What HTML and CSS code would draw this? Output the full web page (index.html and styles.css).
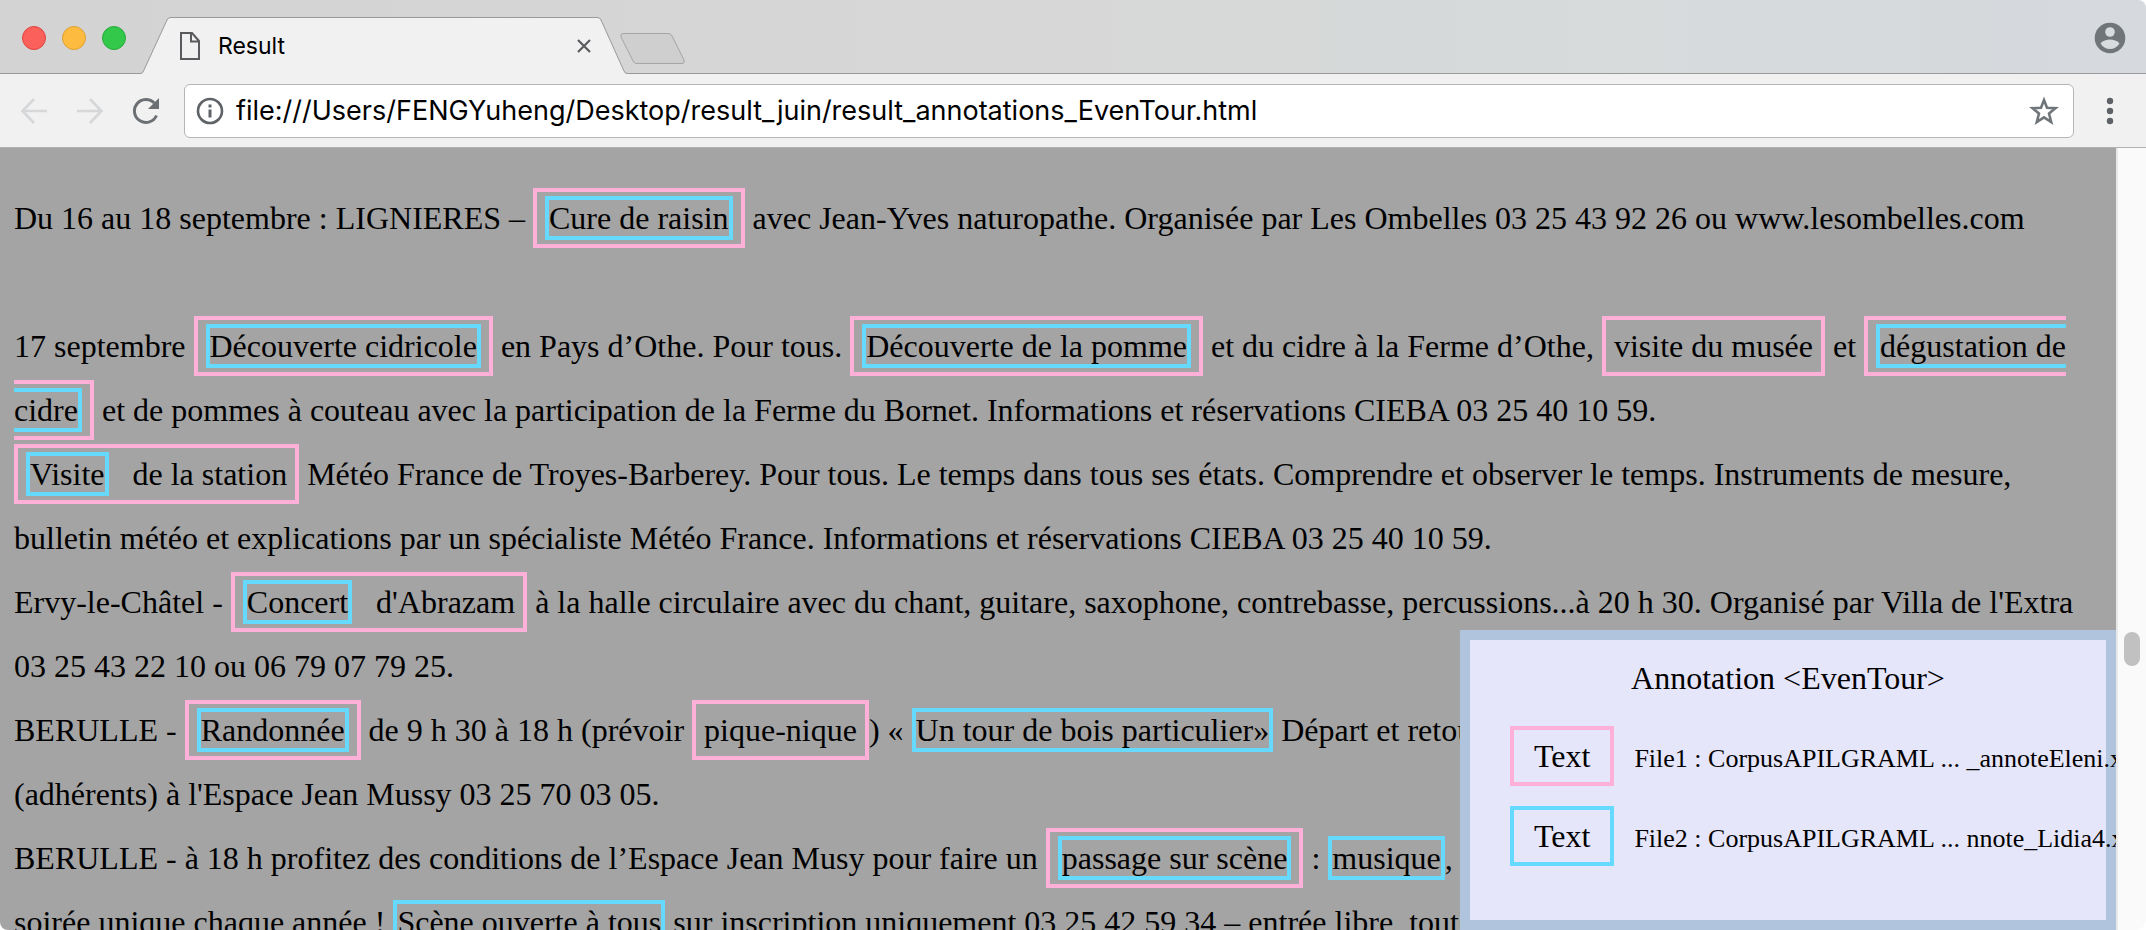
FILE: index.html
```html
<!DOCTYPE html>
<html lang="fr">
<head>
<meta charset="utf-8">
<title>Result</title>
<link rel="stylesheet" href="styles.css">
</head>
<body>
<div class="window">
  <header class="tabstrip">
    <div class="lights">
      <button class="light light-close" aria-label="Fermer"></button>
      <button class="light light-min" aria-label="Réduire"></button>
      <button class="light light-max" aria-label="Agrandir"></button>
    </div>
    <div class="tab">
      <svg class="tab-shape" width="488" height="58" viewBox="0 0 488 58" aria-hidden="true">
        <path d="M0 56.500H1Q2.500 56.500 3.500 54L27 3Q28 .5 31 .5H457Q460 .5 461 3L484 54Q485 56.500 487 56.500H488V58H0Z" fill="#f1f1f1"/>
        <path d="M0 56.500H1Q2.500 56.500 3.500 54L27 3Q28 .5 31 .5H457Q460 .5 461 3L484 54Q485 56.500 487 56.500H488" fill="none" stroke="#97999b"/>
      </svg>
      <svg class="tab-file" width="20" height="28" viewBox="0 0 20 28" aria-hidden="true">
        <path d="M1 1H12L19 9V27H1ZM11 1V9.500H19" fill="none" stroke="#5a5b5e" stroke-width="2"/>
      </svg>
      <span class="tab-title">Result</span>
      <button class="tab-close" aria-label="Fermer l'onglet">
        <svg width="14" height="14" viewBox="0 0 14 14"><path d="M1 1L13 13M13 1L1 13" stroke="#5a5b5e" stroke-width="2.200"/></svg>
      </button>
    </div>
    <button class="newtab" aria-label="Nouvel onglet">
      <svg width="67" height="34" viewBox="0 0 67 34"><path d="M4 1.500H49Q52 1.500 53 4L65 28Q66 31.500 63 31.500H18Q15 31.500 14 29L2 5Q1 1.500 4 1.500Z" fill="#cfcfcf" stroke="#a3a5a6"/></svg>
    </button>
    <button class="avatar" aria-label="Profil">
      <svg width="32" height="32" viewBox="0 0 32 32"><circle cx="16" cy="16" r="15.300" fill="#707579"/><circle cx="16" cy="10" r="4.800" fill="#d7dbdd"/><path d="M6.500 21.500C9 18.500 12.500 17.500 16 17.500S23 18.500 25.500 21.500C23.500 25 20 27 16 27S8.500 25 6.500 21.500Z" fill="#d7dbdd"/></svg>
    </button>
  </header>

  <nav class="toolbar">
    <div class="nav-buttons">
      <button class="icon" aria-label="Précédent"><svg width="28" height="28" viewBox="0 0 28 28"><path d="M27 14H3M14 2L2.500 14L14 26" fill="none" stroke="#d5d7d9" stroke-width="2.600"/></svg></button>
      <button class="icon" aria-label="Suivant"><svg width="28" height="28" viewBox="0 0 28 28"><path d="M1 14H25M14 2L25.500 14L14 26" fill="none" stroke="#d5d7d9" stroke-width="2.600"/></svg></button>
      <button class="icon" aria-label="Actualiser"><svg width="28" height="28" viewBox="0 0 28 28"><path d="M24.500 18.500A11.500 11.500 0 1 1 22.300 6" fill="none" stroke="#6c7075" stroke-width="3"/><path d="M27 1V12H16Z" fill="#6c7075"/></svg></button>
    </div>
    <div class="omnibox">
      <svg width="28" height="28" viewBox="0 0 28 28" aria-hidden="true"><circle cx="14" cy="14" r="12" fill="none" stroke="#5f6368" stroke-width="2.600"/><path d="M12.500 12.500H15.500V20.500H12.500ZM12.500 7.500H15.500V10.500H12.500Z" fill="#5f6368"/></svg>
      <input class="url" type="text" aria-label="Adresse" value="file:///Users/FENGYuheng/Desktop/result_juin/result_annotations_EvenTour.html">
      <button class="icon" aria-label="Favori"><svg width="30" height="30" viewBox="0 0 30 30"><path d="M15 4L18 11.800L26.500 12.200L20 17.500L22.200 26L15 21.300L7.800 26L10 17.500L3.500 12.200L12 11.800Z" fill="none" stroke="#70757a" stroke-width="2.600"/></svg></button>
    </div>
    <button class="icon menu" aria-label="Menu"><svg width="8" height="28" viewBox="0 0 8 28"><g fill="#5f6368"><circle cx="4" cy="4" r="3.200"/><circle cx="4" cy="14" r="3.200"/><circle cx="4" cy="24" r="3.200"/></g></svg></button>
  </nav>

  <div class="viewport">
    <main class="page">
      <p class="entry entry-first">Du 16 au 18 septembre : LIGNIERES – <span class="file1"><span class="file2">Cure de raisin</span></span> avec Jean-Yves naturopathe. Organisée par Les Ombelles 03 25 43 92 26 ou www.lesombelles.com</p>
      <p class="entry">17 septembre <span class="file1"><span class="file2">Découverte cidricole</span></span> en Pays d’Othe. Pour tous. <span class="file1"><span class="file2">Découverte de la pomme</span></span> et du cidre à la Ferme d’Othe, <span class="file1">visite du musée</span> et <span class="file1"><span class="file2">dégustation de cidre</span></span> et de pommes à couteau avec la participation de la Ferme du Bornet. Informations et réservations CIEBA 03 25 40 10 59.</p>
      <p class="entry"><span class="file1"><span class="file2">Visite</span>&nbsp;&nbsp; de la station</span> Météo France de Troyes-Barberey. Pour tous. Le temps dans tous ses états. Comprendre et observer le temps. Instruments de mesure, bulletin météo et explications par un spécialiste Météo France. Informations et réservations CIEBA 03 25 40 10 59.</p>
      <p class="entry">Ervy-le-Châtel - <span class="file1"><span class="file2">Concert</span>&nbsp;&nbsp; d'Abrazam</span> à la halle circulaire avec du chant, guitare, saxophone, contrebasse, percussions...à 20 h 30. Organisé par Villa de l'Extra 03 25 43 22 10 ou 06 79 07 79 25.</p>
      <p class="entry">BERULLE - <span class="file1"><span class="file2">Randonnée</span></span> de 9 h 30 à 18 h (prévoir <span class="file1">pique-nique</span>) « <span class="file2">Un tour de bois particulier»</span> Départ et retour<br>(adhérents) à l'Espace Jean Mussy 03 25 70 03 05.</p>
      <p class="entry">BERULLE - à 18 h profitez des conditions de l’Espace Jean Musy pour faire un <span class="file1"><span class="file2">passage sur scène</span></span> : <span class="file2">musique</span>, <span class="file2">danse</span><br>soirée unique chaque année ! <span class="file2">Scène ouverte à tous</span> sur inscription uniquement 03 25 42 59 34 – entrée libre, toute</p>
      <aside class="legend">
        <h1 class="legend-title">Annotation &lt;EvenTour&gt;</h1>
        <ul class="legend-list">
          <li class="legend-row"><span class="sample sample-file1">Text</span><span class="legend-file">File1 : CorpusAPILGRAML ... _annoteEleni.xml</span></li>
          <li class="legend-row"><span class="sample sample-file2">Text</span><span class="legend-file">File2 : CorpusAPILGRAML ... nnote_Lidia4.xml</span></li>
        </ul>
      </aside>
    </main>
    <div class="scrollbar"><div class="thumb"></div></div>
  </div>
</div>
</body>
</html>
```

FILE: styles.css
```css
* { box-sizing: border-box; }

body {
  margin: 0;
  background: #fff;
}

button {
  padding: 0;
  border: 0;
  background: none;
}

svg { display: block; }

.window {
  display: flex;
  flex-direction: column;
  height: 100vh;
  overflow: hidden;
  border-radius: 0 8px 10px 8px;
}

/* Tab strip */
.tabstrip {
  display: flex;
  flex: none;
  height: 74px;
  padding-right: 20px;
  background: linear-gradient(90deg, #d3d3d3, #d6d7d6 50%, #d7dbdc 75%, #d6d9dd);
  border-bottom: 1px solid #97999b;
}

.lights {
  display: flex;
  gap: 16px;
  padding: 26px 0 0 22px;
}

.light {
  width: 24px;
  height: 24px;
  border: 1px solid;
  border-radius: 50%;
}

.light-close { background: #fc605b; border-color: #e0443e; }
.light-min { background: #fdbc40; border-color: #dea034; }
.light-max { background: #34c84a; border-color: #27a93b; }

.tab {
  position: relative;
  display: flex;
  align-items: center;
  gap: 18px;
  width: 488px;
  height: 58px;
  margin: 17px 0 0 14px;
  padding: 0 37px 0 40px;
}

.tab-shape {
  position: absolute;
  inset: 0;
}

.tab-file,
.tab-title,
.tab-close { position: relative; }

.tab-title {
  flex: 1;
  font: 23px/28px Inter, sans-serif;
}

.newtab {
  align-self: flex-start;
  margin: 32px 0 0 -9px;
}

.avatar {
  align-self: flex-start;
  margin: 22px 0 0 auto;
}

/* Toolbar */
.toolbar {
  display: flex;
  flex: none;
  align-items: center;
  gap: 24px;
  height: 74px;
  padding: 0 32px 0 20px;
  background: #f1f1f1;
  border-bottom: 1px solid #b0b0b0;
}

.nav-buttons {
  display: flex;
  gap: 28px;
}

.menu { margin-left: 8px; }

.omnibox {
  display: flex;
  flex: 1;
  align-items: center;
  gap: 12px;
  height: 54px;
  padding: 0 14px 0 11px;
  background: #fff;
  border: 1px solid #b4b5b6;
  border-radius: 6px;
}

.url {
  flex: 1;
  min-width: 0;
  padding: 0;
  border: 0;
  outline: 0;
  background: none;
  color: #000;
  font: 27px/36px Inter, sans-serif;
}

/* Document */
.viewport {
  display: flex;
  flex: 1;
  min-height: 0;
}

.page {
  position: relative;
  flex: 1;
  min-width: 0;
  padding: 38px 14px 0;
  overflow: hidden;
  background: #a4a4a4;
  color: #000;
  font: 32px/64px "Liberation Serif", serif;
}

.entry { margin: 0; }

.entry-first { margin-bottom: 64px; }

.file1 {
  padding: 8px;
  border: 4px solid #ffb0d9;
}

.file2 { border: 4px solid #66d9ff; }

.legend {
  position: absolute;
  right: 0;
  bottom: 0;
  width: 656px;
  height: 300px;
  padding: 6px 40px;
  background: #e6e6fa;
  border: 10px solid #b0c4de;
}

.legend-title {
  margin: 0;
  font-size: 32px;
  font-weight: 400;
  text-align: center;
}

.legend-list {
  display: flex;
  flex-direction: column;
  gap: 20px;
  margin: 16px 0 0;
  padding: 0;
  list-style: none;
}

.legend-row {
  display: flex;
  align-items: baseline;
  gap: 20px;
  white-space: nowrap;
}

.sample {
  padding: 8px 20px;
  border: 4px solid;
  line-height: 36px;
}

.sample-file1 { border-color: #ffb0d9; }
.sample-file2 { border-color: #66d9ff; }

.legend-file {
  font-size: 26px;
  line-height: 36px;
}

.scrollbar {
  flex: none;
  width: 30px;
  padding: 484px 6px 0;
  background: #fafafa;
  border-left: 2px solid #e8e8e8;
}

.thumb {
  width: 16px;
  height: 34px;
  background: #c1c1c1;
  border-radius: 8px;
}
```
